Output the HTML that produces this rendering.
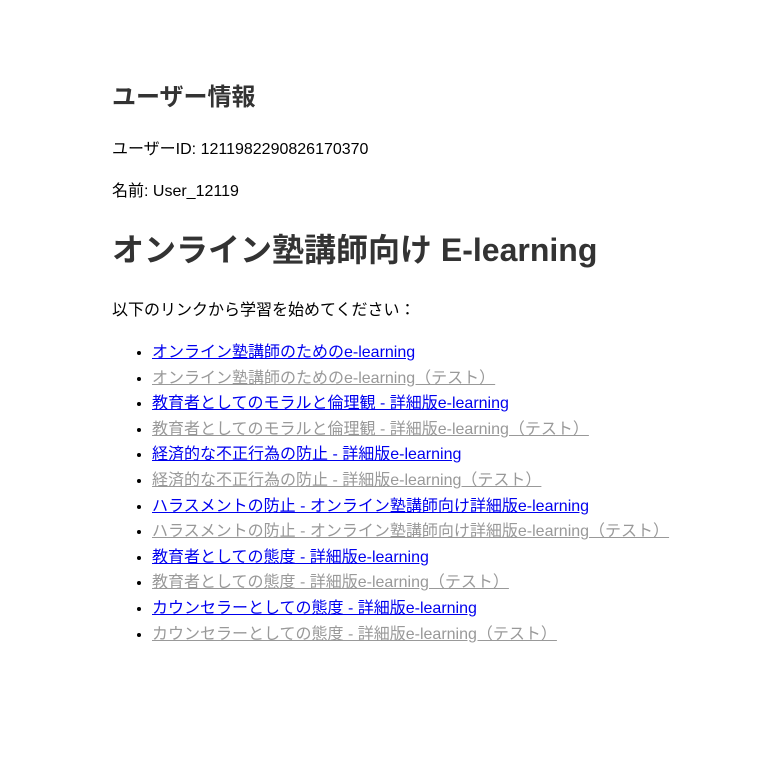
<!DOCTYPE html>
<html><head><meta charset="utf-8"><style>
body{margin:0;width:768px;height:768px;background:#fff;font-family:"Liberation Sans","Noto Sans CJK JP",sans-serif;color:#333;position:relative}
.a{position:absolute;left:112px;margin:0;white-space:nowrap}
h3{font-size:24px;line-height:30px;top:83px}
p{font-size:16px;line-height:26px}
h1{font-size:32px;line-height:40px;top:230px}
ul{position:absolute;left:112px;top:340px;margin:0;padding-left:40px;font-size:16px;line-height:25.6px;color:#000}
a{color:#0000ee}
a.t{color:#999}
</style></head><body>
<h3 class="a">ユーザー情報</h3>
<p class="a" style="top:137px;color:#000">ユーザーID: 1211982290826170370</p>
<p class="a" style="top:179px;color:#000">名前: User_12119</p>
<h1 class="a">オンライン塾講師向け E-learning</h1>
<p class="a" style="top:298px;color:#000">以下のリンクから学習を始めてください：</p>
<ul>
<li><a href="#">オンライン塾講師のためのe-learning</a></li>
<li><a class="t" href="#">オンライン塾講師のためのe-learning（テスト）</a></li>
<li><a href="#">教育者としてのモラルと倫理観 - 詳細版e-learning</a></li>
<li><a class="t" href="#">教育者としてのモラルと倫理観 - 詳細版e-learning（テスト）</a></li>
<li><a href="#">経済的な不正行為の防止 - 詳細版e-learning</a></li>
<li><a class="t" href="#">経済的な不正行為の防止 - 詳細版e-learning（テスト）</a></li>
<li><a href="#">ハラスメントの防止 - オンライン塾講師向け詳細版e-learning</a></li>
<li><a class="t" href="#">ハラスメントの防止 - オンライン塾講師向け詳細版e-learning（テスト）</a></li>
<li><a href="#">教育者としての態度 - 詳細版e-learning</a></li>
<li><a class="t" href="#">教育者としての態度 - 詳細版e-learning（テスト）</a></li>
<li><a href="#">カウンセラーとしての態度 - 詳細版e-learning</a></li>
<li><a class="t" href="#">カウンセラーとしての態度 - 詳細版e-learning（テスト）</a></li>
</ul>
</body></html>
